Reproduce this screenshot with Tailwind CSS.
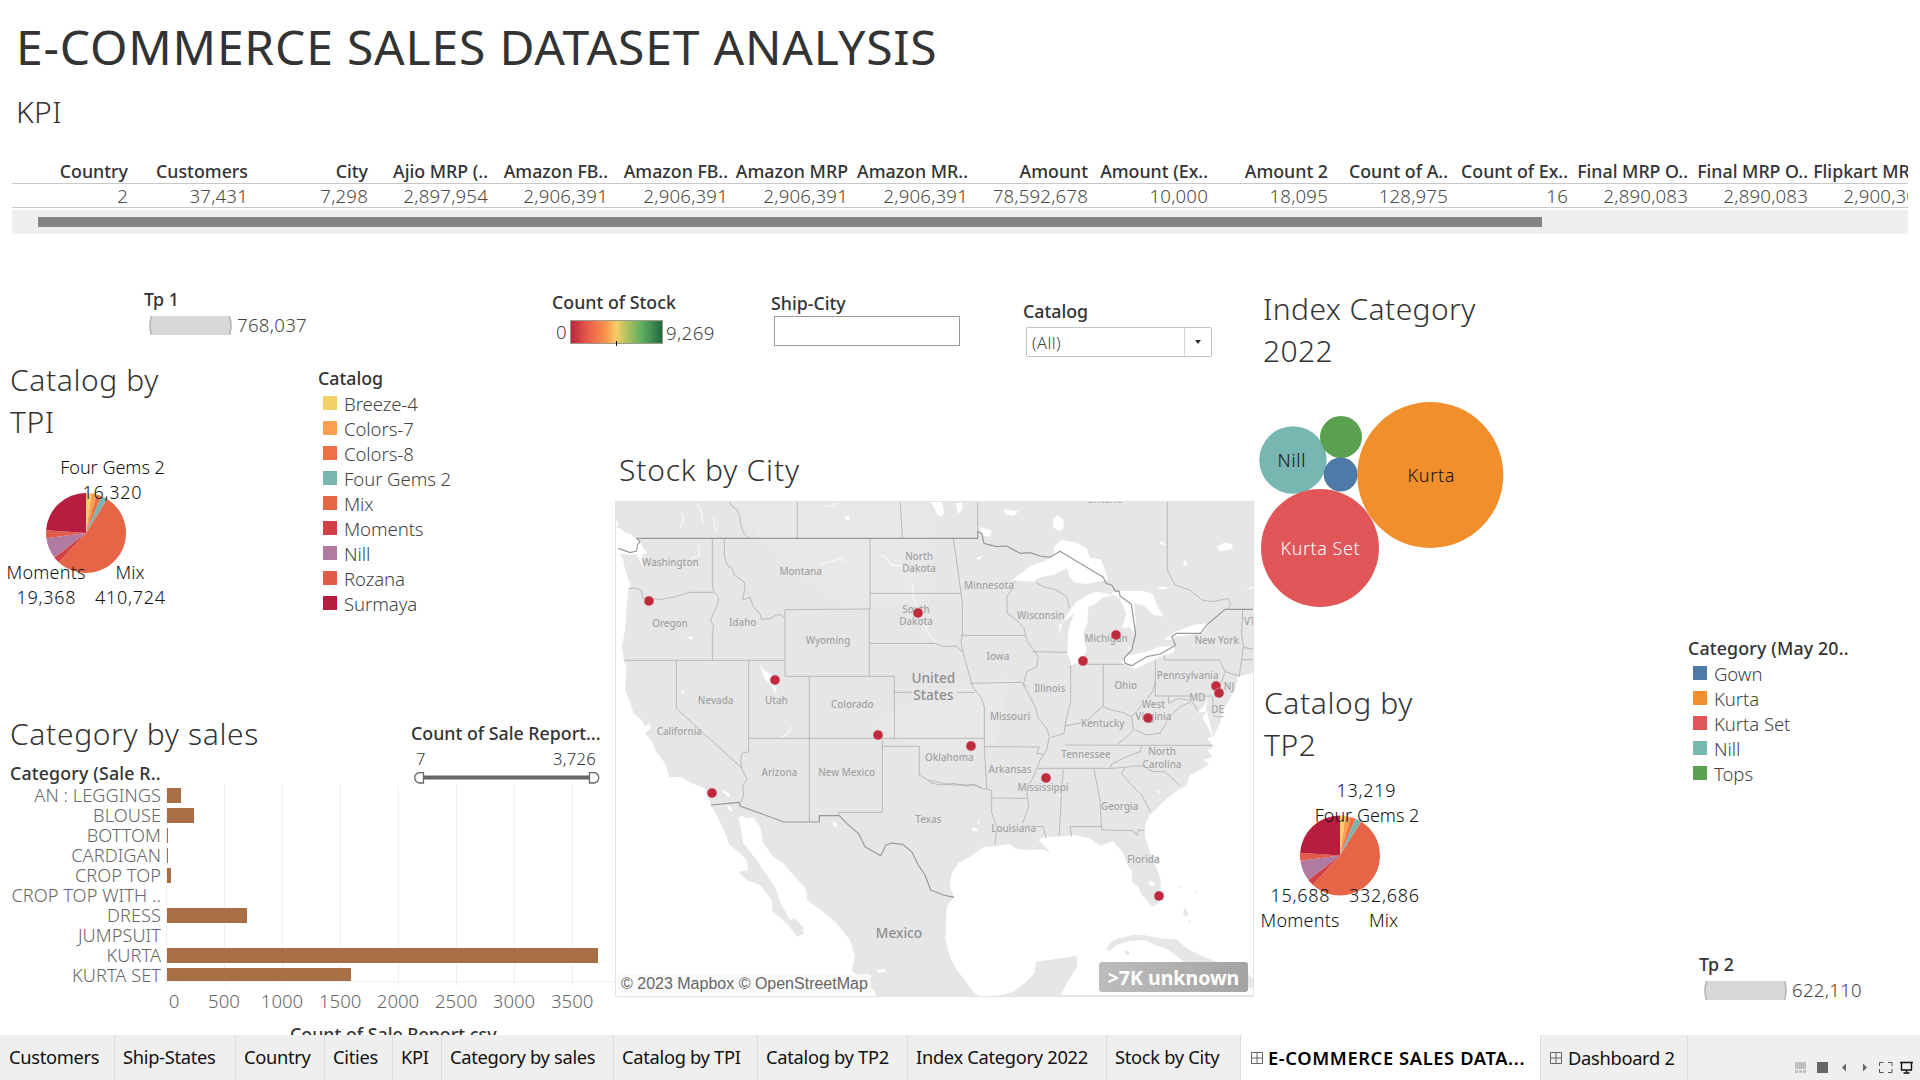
<!DOCTYPE html>
<html lang="en">
<head>
<meta charset="utf-8">
<title>E-Commerce Sales Dataset Analysis</title>
<script src="https://cdn.jsdelivr.net/npm/@tailwindcss/browser@4"></script>
</head>
<body class="flex h-[1080px] w-[1920px] flex-col overflow-hidden bg-white font-['Noto_Sans',sans-serif] text-[18.6px] leading-6 font-light text-[#333]">

<!-- Title and KPI table -->
<header class="h-[234px] shrink-0">
  <h1 class="h-[90px] pl-4 text-[48px] leading-[93px] font-normal tracking-[0.8px] whitespace-nowrap">E-COMMERCE SALES DATASET ANALYSIS</h1>
  <h2 class="h-[42px] pl-4 text-[30px] leading-[44px] tracking-[0.4px]">KPI</h2>
  <div class="mt-[27px] ml-3 w-[1896px] overflow-hidden">
    <div id="kpiHead" class="grid w-[1920px] grid-cols-16 border-b border-[#c8c8c8] text-right text-[17.8px] font-medium whitespace-nowrap"></div>
    <div id="kpiVals" class="grid w-[1920px] grid-cols-16 border-b border-[#c8c8c8] text-right leading-[23px] tracking-[0.2px] text-[#4a4a4a]"></div>
    <div class="mt-0.5 flex h-6 items-center bg-[#efefef] pl-[26px]"><div class="h-[10px] w-[1504px] bg-[#858585]"></div></div>
  </div>
</header>

<main class="flex h-[801px] shrink-0 overflow-hidden">
  <div class="flex w-[1255px] flex-col">
    <!-- Filters -->
    <section class="flex h-[124px] shrink-0">
      <div class="w-[408px] shrink-0 pl-[144px] pt-[53px]">
        <h3 class="text-[17.8px] font-medium">Tp 1</h3>
        <div class="mt-0.5 flex items-center pl-[5px]">
          <svg class="h-[19px] w-[83px]" viewBox="0 0 83 19"><path d="M3 0Q-1 9.500 3 19H80Q84 9.500 80 0Z" fill="#d7d7d7"/><path d="M2.500 0Q-.5 9.500 2.500 19M80.500 0Q83.500 9.500 80.500 19" fill="none" stroke="#b2b2b2" stroke-width="1.500"/></svg>
          <span class="pl-[5px] tracking-[0.3px] text-[#444]">768,037</span>
        </div>
      </div>
      <div class="w-[144px]"></div>
      <div class="w-[219px] shrink-0 pt-14">
        <h3 class="text-[17.8px] font-medium">Count of Stock</h3>
        <div class="mt-[5px] flex items-center pl-1 text-[#444]">
          <span class="w-[14px]">0</span>
          <div class="relative h-6 w-[93px] border border-[#9c9c8c] bg-linear-[90deg,#bd263e,#e8604a_20%,#fb8f4b_37%,#f6cc63_50%,#b8c45f_60%,#5fae62_78%,#24693d]"><i class="absolute top-5 left-[45px] h-[5px] w-px bg-black"></i></div>
          <span class="pt-0.5 pl-[3px] tracking-[0.4px]">9,269</span>
        </div>
      </div>
      <div class="w-[252px] shrink-0 pt-[57px]">
        <h3 class="text-[17.8px] font-medium">Ship-City</h3>
        <div class="mt-px ml-[3px] h-[30px] w-[186px] border border-[#999]"></div>
      </div>
      <div class="w-[232px] shrink-0 pt-[65px]">
        <h3 class="text-[17.8px] font-medium">Catalog</h3>
        <div class="mt-1 ml-[3px] flex h-[30px] w-[186px] items-center rounded-[2px] border border-[#c3c3c3] pl-[5px] text-[16.5px] text-[#444]">
          <span class="flex-1 pt-0.5 tracking-[0.4px]">(All)</span>
          <span class="flex h-full w-[27px] items-center justify-center border-l border-[#d8d8d8]"><i class="border-x-[3.5px] border-t-[4.5px] border-x-transparent border-t-[#333]"></i></span>
        </div>
      </div>
    </section>

    <div class="flex flex-1">
      <div class="w-[615px] shrink-0">
        <!-- Catalog by TPI -->
        <section class="flex h-[354px]">
          <div class="w-[318px] shrink-0">
            <h2 class="h-[84px] pt-px pl-[10px] text-[30px] leading-[42px] tracking-[0.6px]">Catalog by<br>TPI</h2>
            <svg class="h-[200px] w-[318px]" viewBox="0 442 318 200" font-size="18" fill="#111">
              <g id="pie1" transform="translate(86 533)"></g>
              <text x="112.500" y="474" text-anchor="middle">Four Gems 2</text><text x="112" y="499" text-anchor="middle" textLength="59">16,320</text>
              <text x="46" y="579" text-anchor="middle" textLength="79">Moments</text><text x="130" y="579" text-anchor="middle">Mix</text>
              <text x="46" y="604" text-anchor="middle" textLength="59">19,368</text><text x="130" y="604" text-anchor="middle" textLength="70">410,724</text>
            </svg>
          </div>
          <div class="pt-2">
            <h3 class="text-[17.8px] font-medium">Catalog</h3>
            <ul id="leg1" class="text-[#444]"></ul>
          </div>
        </section>
        <!-- Category by sales -->
        <section>
          <div class="flex h-[73px]">
            <div class="w-[411px] pl-[10px]">
              <h2 class="h-[42px] text-[30px] leading-[44px] tracking-[0.65px]">Category by sales</h2>
              <h3 class="mt-[7px] text-[17.8px] font-medium tracking-[0.15px]">Category (Sale R..</h3>
            </div>
            <div class="w-[192px] pt-[9px]">
              <h3 class="text-[17.8px] font-medium whitespace-nowrap">Count of Sale Report...</h3>
              <div class="mt-1 flex justify-between pr-[7px] pl-[5px] text-[16.5px] leading-5"><span>7</span><span class="tracking-[0.3px]">3,726</span></div>
              <svg class="mt-[3px] ml-[3px] h-[12px] w-[187px]" viewBox="0 0 187 12"><path d="M9 5.500H178" stroke="#666" stroke-width="4"/><path d="M9.500.5H6a5 5 0 0 0 0 10.500H9.500ZM175.500.5H179.500a5 5 0 0 1 0 10.500H175.500Z" fill="#fff" stroke="#666" stroke-width="1.300"/></svg>
            </div>
          </div>
          <div class="relative h-[204px]">
            <svg class="absolute top-0 left-[166px] h-[201px] w-[449px]" viewBox="0 0 449 201"><path d="M.5 0V201M58.500 0V201M116.500 0V201M174.500 0V201M232.500 0V201M290.500 0V201M348.500 0V201M406.500 0V201M0 196.500H449" stroke="#efefef" fill="none"/></svg>
            <div id="bars" class="relative h-[200px] text-[18.2px] leading-5 text-[#666]"></div>
          </div>
          <div class="flex pl-[145px] text-center text-[#666]">
            <span class="w-[58px]">0</span><span class="w-[42px]">500</span><span class="w-[74px]">1000</span><span class="w-[42px]">1500</span><span class="w-[74px]">2000</span><span class="w-[42px]">2500</span><span class="w-[74px]">3000</span><span class="w-[42px]">3500</span>
          </div>
          <h3 class="mt-[9px] pl-[290px] text-[17.8px] font-medium">Count of Sale Report.csv</h3>
        </section>
      </div>

      <!-- Stock by City -->
      <section class="w-[640px] pt-[90px]">
        <h2 class="h-[42px] pl-1 text-[30px] leading-[44px] tracking-[0.8px]">Stock by City</h2>
        <div class="relative mt-[11px] h-[496px] w-[639px] border border-[#e2e2e2]">
          <svg class="h-full w-full" viewBox="18 36 1911 1482" preserveAspectRatio="none">
            <rect x="15" y="33" width="1914" height="1485" fill="#e6e6e6"/>
            <path d="M380 33H960V340L700 340L560 250L450 150ZM1000 600L1200 560L1160 760L960 800L780 700Z" fill="#e8e8e8"/>
            <!-- oceans -->
            <g fill="#fff">
              <path d="M15 85L25 100L20 112L35 118L45 128L62 132L75 145L88 150L100 175L112 190L96 192L108 215L100 235L88 210L78 192L60 196L28 190L40 210L42 225L55 270L62 282L55 300L50 350L45 420L36 470L42 515L50 530L48 560L45 600L62 640L70 670L95 690L105 710L122 700L118 720L105 730L130 760L135 780L165 820L178 860L215 862L245 880L285 895L303 945L325 985L350 1040L358 1065L385 1085L410 1110L415 1140L385 1145L410 1170L450 1185L485 1230L488 1265L530 1300L562 1340L580 1332L580 1312L555 1285L540 1290L510 1235L495 1190L460 1140L440 1110L400 1060L390 1000L385 985L395 978L412 985L432 982L450 1010L460 1060L490 1100L520 1120L545 1150L590 1200L590 1230L640 1265L680 1300L720 1350L735 1400L725 1440L745 1460L790 1500L800 1518H15Z"/>
              <path d="M335 900l20 8l6 12l-10-2zM350 945l14 8l4 14l-12-8zM668 993l12 10l2 12l-12-10zM450 525l10 14l25 15l6 30l10 20l-6 5l-8-20l-25-25zM960 33l35 0l8 38l-14 8l-12-20zM702 80l14-2l4 10l-12 4zM230 442l20-4l-6 12zM210 598l12 6l-2 10zM105 245l14-14l-20 20zM800 1440l30-2l-5 8l-22 2z"/>
              <g transform="translate(960 750)">
                <path d="M72 470L50 500L46 600L60 650L80 690L100 715L125 750L145 768H180L215 765L250 755L290 725L313 700L318 665L370 658L440 648L442 680L410 730L392 765H970V-202L925 -190L915 -150L880 -90L870 -50L850 -10L832 -5L850 20L832 30L848 50L820 60L838 72L800 95L780 105L770 135L735 155L700 185L660 225L645 255L645 290L665 350L690 410L693 450L685 490L665 500L650 480L635 465L625 440L605 425L607 395L595 380L580 340L550 303L510 318L480 295L430 285L385 290L345 290L325 300L345 320L362 338L340 328L290 330L255 325L240 312L200 318L160 322L120 350L85 370L65 400L60 440Z"/>
                <path d="M655 430l8-8l12 6l-4 12l-12-4zM125 262l16 4l4 8l-16-2zM140 245l8-2l0 10zM675 148l14 6l2 8z"/>
              </g>
            </g>
            <!-- rivers and reservoirs -->
            <g fill="none" stroke="#f6f6f6" stroke-width="4">
              <path d="M215 65L220 90L210 112M262 40L275 70L280 105M310 80L318 130M265 160L268 195L255 200L240 208M635 222L660 215L690 205L700 215M815 195L830 205L845 225L880 228M905 275L912 330L935 390L955 430L980 458M545 710L535 730L515 742M640 50L665 48L675 38"/>
            </g>
            <!-- lakes and bays -->
            <g transform="translate(960 0)" fill="#fff">
              <path d="M245 272L275 248L300 228L340 215L370 195L372 170L395 150L440 158L470 175L480 205L512 208L525 240L535 270L500 275L470 282L435 278L420 262L410 235L370 255L330 262L310 275Z"/>
              <path d="M395 400L428 350L440 335L480 312L500 305L530 310L550 318L520 322L490 345L475 350L472 400L460 430L470 480L455 515L425 525L412 490L415 420L432 370Z"/>
              <path d="M540 310L580 302L640 303L670 312L680 345L702 380L670 375L640 345L612 340L618 400L610 430L600 412L575 415L590 370L568 325Z"/>
              <path d="M575 520L582 500L600 495L650 485L690 470L725 468L735 475L730 488L690 500L650 520L615 538ZM700 450L735 425L790 405L835 400L820 430L735 440L728 450Z"/>
              <path d="M10 48l16-6l14 22l-4 18l-14-8zM78 40l18-3l2 22l-14 12zM368 90l14-14l18 12l2 24l-14 12l-18-12zM862 170l20-12l24 4l2 14l-40 8zM220 58l45 6l-15 14l-24-6zM150 110l36 12l-8 18l-24-6zM138 205l22-10l-12 14zM680 290l38 2l-20 8zM690 152l22 14l-20-4zM765 208l8 20l-14-4zM945 300l24-12v6zM388 400l8 6l-8 26zM595 470l10 4l-8 10z"/>
              <path d="M835 610L828 660L840 700L850 745L838 720L822 690L818 680L828 665L800 668L825 645Z"/>
            </g>
            <!-- Cuba, Bahamas and neighbouring islands -->
            <g transform="translate(960 750)" fill="#e6e6e6">
              <path d="M528 632L540 608L565 595L610 585L640 585L690 595L740 598L770 625L820 650L860 665L905 695L850 712L790 695L755 660L715 630L685 618L640 600L600 603L560 615L545 628ZM585 632l14 4l-4 10l-10-4zM765 502l10 20l-8 12l-8-16zM776 535l8 20l-8-8zM745 440l22-2l-20 5zM795 465l6-14l2 6zM905 690l45 8l20 20v25h-30z"/>
            </g>
            <!-- state borders -->
            <g fill="none" stroke="#b0b0b0" stroke-width="2.500">
              <path d="M357 33L365 48L380 58L390 78L392 105L402 130L415 144M562 33V145M871 33L877 145M307 145V292L313 308L326 322L322 345L310 370L302 392L311 408L307 430V511M343 145V200L352 225L368 238L372 255L402 275L405 290L398 330L420 322L430 350L450 372L455 388L480 386L500 375L515 374L524 385M56 296L75 294L95 302L98 325L150 328L190 322L240 307H311M43 511H525M199 511V655L396 835M416 511V785L395 790L392 815L396 838L412 868L398 885L401 915L392 938M525 360V559H853V748M525 359L780 357M780 145V357M780 310H1052M778 357V559M778 460H975L1000 470L1040 468L1055 485M598 559V995M416 745H1123M817 748V967H686V975M817 769H928V855L950 868L965 880L1000 885L1030 880L1070 888L1090 882L1115 893M853 607H905M1040 607H1095"/>
              <g transform="translate(960 0)">
                <path d="M143 36V145M712 33V240L735 285L780 300L815 330L850 335L895 325L902 340L895 358M70 145L78 200L88 270L97 340V436L93 460L105 510L120 560L128 590L155 625L163 650V770L170 897L185 902V970L200 1010L195 1065M92 436H287M287 436L292 455L308 475L325 500L320 530L290 545L280 585L300 620L318 655L325 685L350 715L358 740L350 780L330 810L315 850L290 900L296 950L278 1000M255 272L245 300L230 320L232 370L260 390L282 415L287 436M308 485L412 487M318 278L340 290L380 300L410 320L418 355M120 580L275 577L290 590M422 525V635L408 690L402 730L365 742M455 523H583M520 523V648L492 672L470 695L405 708M520 650L545 660L580 668L605 680L640 640L668 605L676 575M676 510V618H848M703 495V510H868L885 545L928 558M885 545L875 575L860 600M605 680L610 720L580 750L560 763M405 765L635 766H848M163 770L328 771L320 790L340 793M325 835H545L585 832M635 766L630 785L590 800L545 822L538 838M400 838L395 900L388 1035M492 838L510 930L515 1020L610 1022L620 1036L625 1020L642 1022M585 832L610 828H640L668 845H705L750 887M585 832L575 850L600 880L635 915L662 965M185 924L290 925M278 1008L340 1010L348 1045M515 1010H420L425 1040M715 618L716 640L745 625L785 632L805 665M785 635L750 650L720 680L690 730L650 735L615 720M848 620L852 680H880M938 358L935 430L940 470L928 558M940 472L970 478M935 509H970M-5 870L40 880L70 885L130 885L160 897L170 897"/>
              </g>
            </g>
            <!-- national borders -->
            <g fill="none" stroke="#979797" stroke-width="3.500" stroke-linejoin="round">
              <path d="M25 175L60 188L80 183L82 165L90 155L80 145H1103V125L1115 130L1122 160L1160 170L1190 168L1230 190L1260 188L1290 198L1320 202L1350 184L1480 262L1488 280L1505 285L1515 302L1528 305L1530 318L1564 342L1577 432L1565 480L1542 505L1545 520L1565 527L1610 500L1650 492L1697 466L1685 440L1700 430H1772L1790 405L1845 358H1929M303 945L388 937L390 948L522 996H628V977H688L710 1000L745 1030L765 1070L812 1097L828 1065L845 1059L878 1063L905 1085L925 1125L945 1155L962 1200L1000 1215L1032 1222"/>
            </g>
            <g id="mapLabels" font-size="29.500" fill="#a2a2a2" font-weight="500" text-anchor="middle" stroke="#e8e8e8" stroke-width="4" paint-order="stroke" stroke-linejoin="round"></g>
            <g font-size="41" fill="#8e8e8e" font-weight="500" text-anchor="middle" stroke="#e8e8e8" stroke-width="4" paint-order="stroke"><text x="970" y="579">United</text><text x="970" y="630">States</text><text x="867" y="1344">Mexico</text></g>
            <g id="cities" fill="#bf2a3c" stroke="#e2cdd0" stroke-width="1.500"></g>
          </svg>
          <div class="absolute bottom-[2px] left-[2px] bg-[#fafafa]/90 px-[3px] font-['Liberation_Sans',sans-serif] text-[16px] leading-[20px] font-normal whitespace-nowrap text-[#666]">© 2023 Mapbox © OpenStreetMap</div>
          <div class="absolute right-[5px] bottom-[4px] h-[30px] w-[149px] rounded-[3px] bg-linear-to-r from-[#bcbcbc] to-[#a4a4a4] text-center text-[19.5px] leading-[32px] font-bold whitespace-nowrap text-white">&gt;7K unknown</div>
        </div>
      </section>
    </div>
  </div>

  <!-- Index category and Catalog by TP2 -->
  <section class="w-[433px] shrink-0 pt-[53px]">
    <h2 class="h-[84px] pt-px pl-2 text-[30px] leading-[42px] tracking-[0.4px]">Index Category<br>2022</h2>
    <svg class="h-[309px] w-[433px]" viewBox="1255 371 433 309" font-size="18" text-anchor="middle">
      <circle cx="1293" cy="460" r="33.700" fill="#78b6b1"/><circle cx="1341" cy="437" r="21" fill="#5aa14f"/><circle cx="1340.700" cy="474.500" r="17" fill="#4f79a7"/><circle cx="1430.300" cy="475" r="73" fill="#f28f2d"/><circle cx="1320" cy="548" r="59" fill="#e05659"/>
      <text x="1291.500" y="467" fill="#111" textLength="28">Nill</text><text x="1431" y="482" fill="#111" textLength="47">Kurta</text><text x="1320" y="555" fill="#fff" textLength="79">Kurta Set</text>
    </svg>
    <h2 class="h-[84px] pt-0.5 pl-[9px] text-[30px] leading-[42px] tracking-[0.6px]">Catalog by<br>TP2</h2>
    <svg class="h-[200px] w-[433px]" viewBox="1255 764 433 200" font-size="18" fill="#111" text-anchor="middle">
      <g id="pie2" transform="translate(1340 855.500)"></g>
      <text x="1366" y="797" textLength="59">13,219</text><text x="1367" y="822">Four Gems 2</text>
      <text x="1300" y="902" textLength="59">15,688</text><text x="1384" y="902" textLength="70">332,686</text>
      <text x="1300" y="927" textLength="79">Moments</text><text x="1383.500" y="927">Mix</text>
    </svg>
  </section>
  <section class="flex w-[232px] flex-col">
    <div class="h-[718px] pt-[402px]">
      <h3 class="text-[17.8px] font-medium tracking-[0.15px] whitespace-nowrap">Category (May 20..</h3>
      <ul id="leg2" class="text-[#444]"></ul>
    </div>
    <div class="pl-[11px]">
      <h3 class="text-[17.8px] font-medium">Tp 2</h3>
      <div class="mt-0.5 flex items-center pl-[5px]">
        <svg class="h-[19px] w-[83px]" viewBox="0 0 83 19"><path d="M3 0Q-1 9.500 3 19H80Q84 9.500 80 0Z" fill="#d7d7d7"/><path d="M2.500 0Q-.5 9.500 2.500 19M80.500 0Q83.500 9.500 80.500 19" fill="none" stroke="#b2b2b2" stroke-width="1.500"/></svg>
        <span class="pl-[5px] tracking-[0.3px] text-[#444]">622,110</span>
      </div>
    </div>
  </section>
</main>

<!-- Sheet tabs -->
<nav class="flex h-[45px] shrink-0 bg-[#efefef] text-[18.3px] leading-[44px] font-normal tracking-[-0.3px] whitespace-nowrap text-[#111]">
  <span class="w-[115px] border-r border-[#dcdcdc] pl-[9px]">Customers</span>
  <span class="w-[121px] border-r border-[#dcdcdc] pl-2">Ship-States</span>
  <span class="w-[89px] border-r border-[#dcdcdc] pl-2">Country</span>
  <span class="w-[68px] border-r border-[#dcdcdc] pl-2">Cities</span>
  <span class="w-[49px] border-r border-[#dcdcdc] pl-2">KPI</span>
  <span class="w-[172px] border-r border-[#dcdcdc] pl-2">Category by sales</span>
  <span class="w-[144px] border-r border-[#dcdcdc] pl-2">Catalog by TPI</span>
  <span class="w-[150px] border-r border-[#dcdcdc] pl-2">Catalog by TP2</span>
  <span class="w-[199px] border-r border-[#dcdcdc] pl-2">Index Category 2022</span>
  <span class="w-[134px] border-r border-[#dcdcdc] pl-2">Stock by City</span>
  <span class="flex w-[300px] items-center gap-[5px] border-r border-[#dcdcdc] bg-white pl-[10px] leading-[42px] font-semibold tracking-[0.62px] text-black">
    <svg class="size-3" viewBox="0 0 12 12" fill="none" stroke="#666"><path d="M.5.5H11.500V11.500H.5ZM6 .5V11.500M.5 6H11.500"/></svg>E-COMMERCE SALES DATA...</span>
  <span class="flex w-[147px] items-center gap-[6px] border-r border-[#dcdcdc] pl-[9px]">
    <svg class="size-3" viewBox="0 0 12 12" fill="none" stroke="#666"><path d="M.5.5H11.500V11.500H.5ZM6 .5V11.500M.5 6H11.500"/></svg>Dashboard 2</span>
  <svg class="ml-[102px] h-[45px] w-[130px]" viewBox="1790 1035 130 45">
    <path d="M1795 1062h11v7h-11zM1795 1070h3v3h-3zM1799 1070h3v3h-3zM1803 1070h3v3h-3z" fill="#c0c0c0"/>
    <path d="M1817 1062h11v11h-11zM1846 1063.500v8l-4-4zM1863 1063.500v8l4-4z" fill="#666"/>
    <path d="M1879.500 1066v-3.500h4M1888 1062.500h4v3.500M1892 1069v3.500h-4M1883.500 1072.500h-4v-3.500" fill="none" stroke="#555"/>
    <path d="M1900 1062.500h13M1901.500 1062.500v7.500h10v-7.500M1906.500 1070v3M1903.500 1073h6" fill="none" stroke="#111" stroke-width="1.400"/>
  </svg>
</nav>

<script>
const $ = id => document.getElementById(id);
const kpis = [["Country","2"],["Customers","37,431"],["City","7,298"],["Ajio MRP (..","2,897,954"],["Amazon FB..","2,906,391"],["Amazon FB..","2,906,391"],["Amazon MRP","2,906,391"],["Amazon MR..","2,906,391"],["Amount","78,592,678"],["Amount (Ex..","10,000"],["Amount 2","18,095"],["Count of A..","128,975"],["Count of Ex..","16"],["Final MRP O..","2,890,083"],["Final MRP O..","2,890,083"],["Flipkart MRP..","2,900,309"]];
$("kpiHead").innerHTML = kpis.map(k => `<span class="pr-1">${k[0]}</span>`).join("");
$("kpiVals").innerHTML = kpis.map(k => `<span class="pr-1">${k[1]}</span>`).join("");

const legend = rows => rows.map(r => `<li class="flex h-[25px] items-center pt-0.5 pl-[5px] tracking-[-0.1px]"><i class="mr-[7px] size-[14px] -translate-y-px" style="background:${r[1]}"></i>${r[0]}</li>`).join("");
$("leg1").innerHTML = legend([["Breeze-4","#f4d166"],["Colors-7","#fa9e50"],["Colors-8","#ed7047"],["Four Gems 2","#78b6b1"],["Mix","#e66547"],["Moments","#d04045"],["Nill","#b07aa1"],["Rozana","#e15b48"],["Surmaya","#b71d3e"]]);
$("leg2").innerHTML = legend([["Gown","#4f79a7"],["Kurta","#f28f2d"],["Kurta Set","#e05659"],["Nill","#78b6b1"],["Tops","#5aa14f"]]);

const bars = [["AN : LEGGINGS",14],["BLOUSE",27],["BOTTOM",1],["CARDIGAN",1],["CROP TOP",4],["CROP TOP WITH ..",0],["DRESS",80],["JUMPSUIT",0],["KURTA",431],["KURTA SET",184]];
$("bars").innerHTML = bars.map((b, i) => `<div class="flex h-5"><span class="w-[161px] text-right tracking-[0.05px] whitespace-nowrap">${b[0]}</span><i class="mt-[3px] ml-[6px] bg-[#a86f46]" style="width:${b[1]}px;height:${i === 9 ? 13 : 15}px"></i></div>`).join("");

const slices = [[0,7.7,"#f4d166"],[7.7,15.4,"#fa9e50"],[15.4,23,"#ed7047"],[23,32,"#78b6b1"],[32,223,"#e66547"],[223,232.3,"#d04045"],[232.3,262.3,"#b07aa1"],[262.3,274,"#e15b48"],[274,360,"#b71d3e"]];
const at = d => [40 * Math.sin(d * Math.PI / 180), -40 * Math.cos(d * Math.PI / 180)].map(v => v.toFixed(2)).join(" ");
const pie = slices.map(s => `<path d="M0 0L${at(s[0])}A40 40 0 ${s[1] - s[0] > 180 ? 1 : 0} 1 ${at(s[1])}Z" fill="${s[2]}"/>`).join("");
$("pie1").innerHTML = pie;
$("pie2").innerHTML = pie;

const labels = [["Washington",181,228],["Montana",572,256],["North",927,210],["Dakota",927,247],["South",918,368],["Dakota",918,404],["Oregon",180,411],["Idaho",398,408],["Wyoming",654,461],["Nevada",317,643],["Utah",499,643],["Colorado",727,655],["California",208,735],["Arizona",508,859],["New Mexico",710,859],["Oklahoma",1018,814],["Minnesota",1137,296],["Wisconsin",1292,386],["Michigan",1488,457],["Iowa",1164,511],["Illinois",1319,607],["Ohio",1547,596],["Pennsylvania",1733,566],["New York",1820,461],["NJ",1857,600],["MD",1762,634],["DE",1823,670],["West",1630,653],["Virginia",1630,690],["Kentucky",1478,711],["Missouri",1200,690],["Tennessee",1428,803],["North",1656,796],["Carolina",1656,833],["Arkansas",1200,848],["Mississippi",1299,903],["Georgia",1529,961],["Louisiana",1211,1025],["Texas",955,1000],["Florida",1600,1119],["VT",1919,404],["Ontario",1484,39]];
$("mapLabels").innerHTML = labels.map(l => `<text x="${l[1]}" y="${l[2]}">${l[0]}</text>`).join("");

const cities = [[117,333],[924,369],[495,570],[804,735],[306,909],[1083,768],[1308,864],[1518,435],[1419,513],[1614,684],[1818,588],[1827,609],[1647,1218]];
$("cities").innerHTML = cities.map(c => `<circle cx="${c[0]}" cy="${c[1]}" r="15"/>`).join("");
</script>
</body>
</html>
